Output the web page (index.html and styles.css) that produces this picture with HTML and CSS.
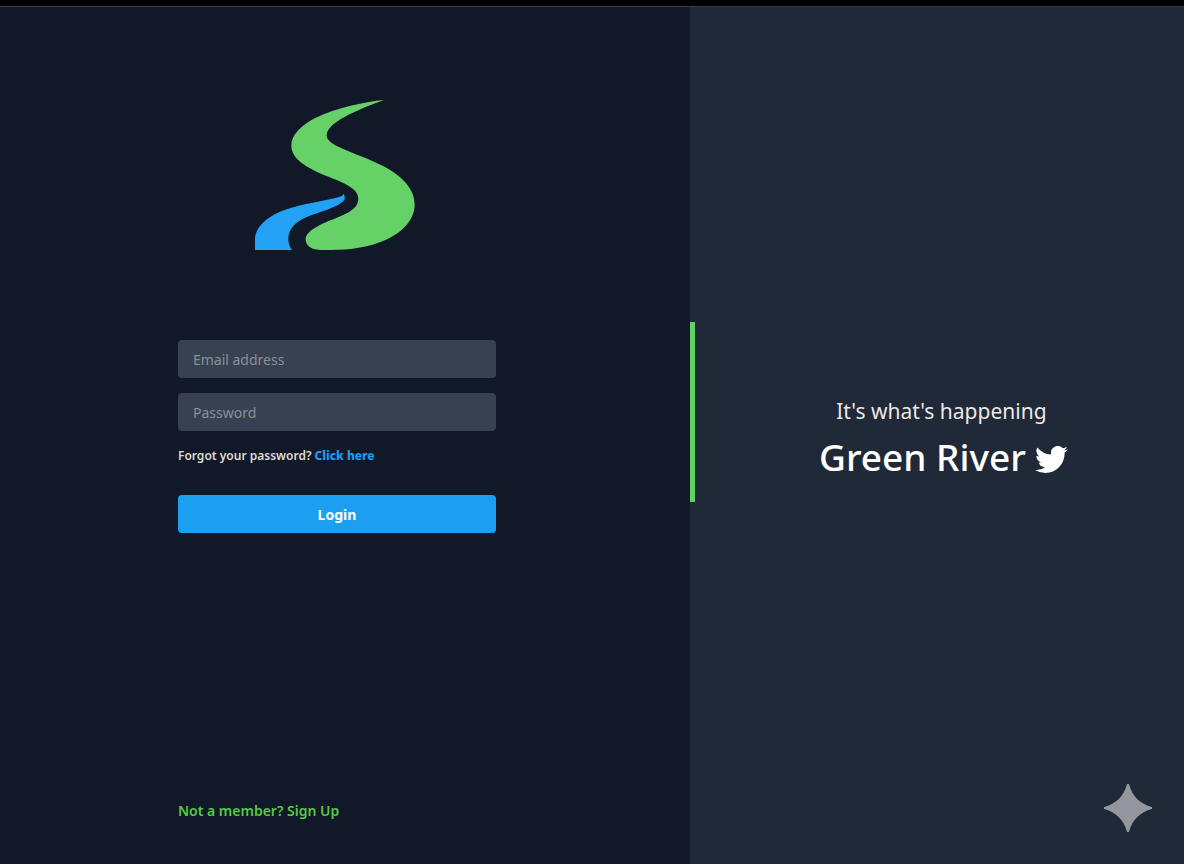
FILE: index.html
```html
<!DOCTYPE html>
<html lang="en">
<head>
<meta charset="utf-8">
<meta name="viewport" content="width=device-width, initial-scale=1">
<title>Green River</title>
<link rel="stylesheet" href="styles.css">
</head>
<body>
<main class="page">
  <section class="login">
    <svg class="logo" viewBox="45 45 480 450" role="img" aria-label="Green River logo">
      <path class="logo-river" d="M432 45C372 50 285 70 226 99C182 121 154 151 154 181C154 218 190 243 245 267C302 290 355 307 355 341C355 372 320 386 282 402C238 418 197 439 197 463C197 484 216 495 245 495C315 496 382 490 438 464C490 440 524 402 524 359C524 308 480 267 418 238C369 214 325 201 292 184C270 173 260 163 260 151C260 129 288 108 330 87C363 71 397 58 432 45Z"/>
      <path class="logo-stream" d="M45 495V464C45 425 84 392 140 373C192 355 246 349 289 338C301 335 309 333 311 326C318 340 314 346 304 353C280 371 237 381 202 395C166 410 145 431 145 462C145 475 149 487 156 495Z"/>
    </svg>
    <form class="form">
      <input class="field" type="email" placeholder="Email address" aria-label="Email address">
      <input class="field" type="password" placeholder="Password" aria-label="Password">
      <p class="forgot">Forgot your password? <a class="forgot-link" href="#">Click here</a></p>
      <button class="submit" type="submit">Login</button>
    </form>
    <a class="signup" href="#">Not a member? Sign Up</a>
  </section>
  <aside class="aside">
    <span class="accent"></span>
    <div class="message">
      <p class="tagline">It's what's happening</p>
      <h1 class="brand">Green River
        <svg class="bird" viewBox="0 0 24 20" aria-hidden="true"><path d="M24 2.4a9.8 9.8 0 0 1-2.8.8A5 5 0 0 0 23.300.5a9.900 9.900 0 0 1-3.100 1.200A4.900 4.900 0 0 0 11.800 6.200 14 14 0 0 1 1.700 1a4.900 4.900 0 0 0 1.500 6.600 4.900 4.900 0 0 1-2.200-.6c-.1 2.300 1.600 4.400 3.900 4.900a4.900 4.900 0 0 1-2.200.1 4.900 4.900 0 0 0 4.600 3.400A9.900 9.900 0 0 1 0 17.400a14 14 0 0 0 7.500 2.200c9.100 0 14.300-7.700 14-14.700A10 10 0 0 0 24 2.400z"/></svg>
      </h1>
    </div>
    <svg class="sparkle" viewBox="0 0 48 48" aria-hidden="true"><path d="M23 0h2C28 12 36 20 48 23v2C36 28 28 36 25 48h-2C20 36 12 28 0 25v-2C12 20 20 12 23 0z"/></svg>
  </aside>
</main>
</body>
</html>
```

FILE: styles.css
```css
* {
  box-sizing: border-box;
}

body {
  margin: 0;
  background: #111827;
  color: #fff;
  font-family: "Noto Sans", "Open Sans", sans-serif;
}

p,
h1 {
  margin: 0;
}

a {
  text-decoration: none;
}

.page {
  display: grid;
  grid-template-columns: 141fr 101fr;
  min-height: 100vh;
  border-top: 6px solid #000;
}

.login {
  display: flex;
  flex-direction: column;
  align-items: center;
  padding: 93px 32px 40px 16px;
  border-top: 1px solid #3b3b43;
}

.logo {
  width: 160px;
  margin-right: 4px;
}

.logo-river {
  fill: #65d166;
}

.logo-stream {
  fill: #23a1f5;
}

.form {
  display: flex;
  flex-direction: column;
  gap: 15px;
  width: 100%;
  max-width: 318px;
  margin-top: 90px;
}

.field {
  width: 100%;
  height: 38px;
  padding: 0 15px;
  border: 0;
  border-radius: 4px;
  background: #374151;
  color: #fff;
  font: 400 14px "Noto Sans", sans-serif;
}

.field::placeholder {
  color: #8b9098;
}

.forgot {
  color: #ddd9d6;
  font-size: 12px;
  font-weight: 600;
  line-height: 20px;
}

.forgot-link {
  color: #1d9bf0;
  font-weight: 800;
}

.submit {
  height: 38px;
  margin-top: 14px;
  border: 0;
  border-radius: 4px;
  background: #1d9ff1;
  color: #fff;
  font: 700 14px "Noto Sans", sans-serif;
}

.signup {
  width: 100%;
  max-width: 318px;
  margin-top: auto;
  color: #55c944;
  font-size: 14px;
  font-weight: 600;
  line-height: 26px;
}

.aside {
  position: relative;
  display: grid;
  grid-template-columns: 5px 1fr;
  align-items: center;
  border-top: 1px solid #3b3b43;
  background: #1f2937;
}

.accent {
  height: 180px;
  margin-bottom: 48px;
  background: #60d162;
}

.message {
  padding: 10px 0 0 8px;
  text-align: center;
}

.tagline {
  padding-right: 4px;
  color: #ece8e6;
  font-size: 21px;
  line-height: 32px;
}

.brand {
  display: flex;
  justify-content: center;
  align-items: center;
  gap: 9px;
  font-size: 37px;
  font-weight: 500;
  line-height: 60px;
}

.bird {
  width: 33px;
  margin-top: 6px;
  fill: #fff;
}

.sparkle {
  position: absolute;
  right: 32px;
  bottom: 32px;
  width: 48px;
  fill: #92969d;
}
```
